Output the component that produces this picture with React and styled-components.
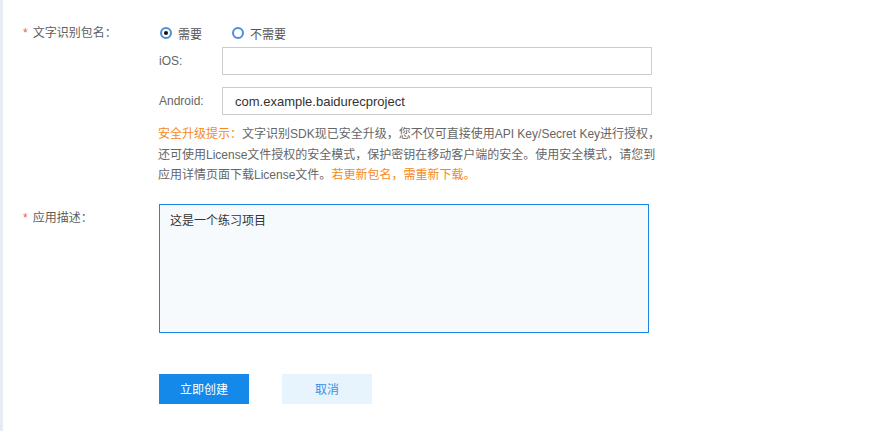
import styled, { createGlobalStyle } from 'styled-components';

const GlobalStyle = createGlobalStyle`
  html, body {
    margin: 0;
    padding: 0;
    background: #fff;
  }
  body {
    font-family: "Liberation Sans", "Noto Sans CJK SC", sans-serif;
    font-size: 12px;
    color: #666;
  }
`;

const Page = styled.div`
  min-height: 431px;
  border-left: 3px solid #e8ecf2;
  box-sizing: border-box;
`;

const Form = styled.form`
  padding: 23px 0 0 20px;
`;

const FormRow = styled.div`
  display: grid;
  grid-template-columns: 136px 1fr;
  margin-bottom: ${(p) => p.$gap || 0}px;
`;

const Label = styled.div`
  line-height: 20px;
  padding-top: ${(p) => p.$top || 0}px;
  color: #5e5e5e;
  font-size: 12px;
  white-space: nowrap;
`;

const Star = styled.span`
  color: #f25c5c;
  margin-right: 5px;
`;

const Control = styled.div`
  display: flex;
  flex-direction: column;
`;

const RadioGroup = styled.div`
  display: flex;
  align-items: center;
  height: 20px;
  padding-left: 1px;
`;

const RadioItem = styled.label`
  display: flex;
  align-items: center;
  gap: 6px;
  margin-right: 30px;
  color: #555;
  cursor: pointer;
`;

const RadioDot = styled.span`
  position: relative;
  width: 12px;
  height: 12px;
  box-sizing: border-box;
  border-radius: 50%;
  border: 2px solid #4a90d9;
  background: #fff;
  &::after {
    content: '';
    display: ${(p) => (p.$checked ? 'block' : 'none')};
    position: absolute;
    left: 2px;
    top: 2px;
    width: 4px;
    height: 4px;
    border-radius: 50%;
    background: #111;
  }
`;

const SubRow = styled.div`
  display: flex;
  align-items: center;
  margin-top: ${(p) => p.$top}px;
`;

const SubLabel = styled.span`
  width: 63px;
  color: #666;
`;

const TextInput = styled.input`
  width: 430px;
  height: 28px;
  box-sizing: border-box;
  border: 1px solid #ccc;
  padding: 0 12px;
  font-family: "Liberation Sans", "Noto Sans CJK SC", sans-serif;
  font-size: 13px;
  color: #333;
  outline: none;
`;

const Tip = styled.p`
  margin: 9px 0 0 -1px;
  line-height: 20.5px;
  color: #666;
  white-space: nowrap;
`;

const Orange = styled.span`
  color: #f5891d;
`;

const TextArea = styled.textarea`
  width: 490px;
  height: 129px;
  box-sizing: border-box;
  border: 1px solid #1a87e6;
  background: #f6fafd;
  padding: 6px 10px;
  line-height: 20px;
  font-family: "Liberation Sans", "Noto Sans CJK SC", sans-serif;
  font-size: 12px;
  color: #333;
  resize: none;
  outline: none;
`;

const Actions = styled.div`
  display: flex;
  gap: 33px;
`;

const Button = styled.button`
  width: 90px;
  height: 30px;
  border: none;
  font-family: "Liberation Sans", "Noto Sans CJK SC", sans-serif;
  font-size: 12px;
  cursor: pointer;
  background: ${(p) => (p.$primary ? '#1589ea' : '#e8f4fd')};
  color: ${(p) => (p.$primary ? '#fff' : '#3a8ee6')};
`;

export default function App() {
  return (
    <Page>
      <GlobalStyle />
      <Form onSubmit={(e) => e.preventDefault()}>
        <FormRow $gap={18}>
          <Label>
            <Star>*</Star>文字识别包名：
          </Label>
          <Control>
            <RadioGroup>
              <RadioItem>
                <RadioDot $checked />
                需要
              </RadioItem>
              <RadioItem>
                <RadioDot />
                不需要
              </RadioItem>
            </RadioGroup>
            <SubRow $top={4}>
              <SubLabel>iOS:</SubLabel>
              <TextInput defaultValue="" />
            </SubRow>
            <SubRow $top={12}>
              <SubLabel>Android:</SubLabel>
              <TextInput defaultValue="com.example.baidurecproject" />
            </SubRow>
            <Tip>
              <Orange>安全升级提示：</Orange>文字识别SDK现已安全升级，您不仅可直接使用API Key/Secret Key进行授权，
              <br />
              还可使用License文件授权的安全模式，保护密钥在移动客户端的安全。使用安全模式，请您到
              <br />
              应用详情页面下载License文件。<Orange>若更新包名，需重新下载。</Orange>
            </Tip>
          </Control>
        </FormRow>
        <FormRow $gap={41}>
          <Label $top={4}>
            <Star>*</Star>应用描述：
          </Label>
          <Control>
            <TextArea defaultValue="这是一个练习项目" />
          </Control>
        </FormRow>
        <FormRow>
          <div />
          <Actions>
            <Button $primary type="submit">立即创建</Button>
            <Button type="button">取消</Button>
          </Actions>
        </FormRow>
      </Form>
    </Page>
  );
}
